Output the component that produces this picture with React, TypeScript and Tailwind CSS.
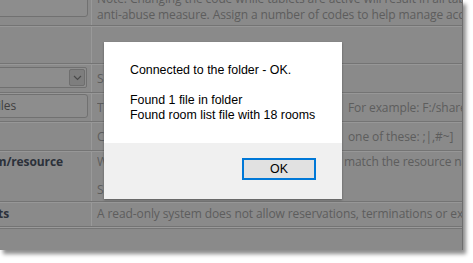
import React from "react"

const rowText = "text-[#5d5d5d]"

function Row({
  left,
  children,
  className,
}: {
  left?: React.ReactNode
  children?: React.ReactNode
  className: string
}) {
  return (
    <div className={`grid grid-cols-[92px_1fr] border-b border-[#747474] ${className}`}>
      <div className="overflow-hidden border-r border-[#999999]">{left}</div>
      <div className={`overflow-hidden whitespace-nowrap pl-[5px] ${rowText}`}>{children}</div>
    </div>
  )
}

// anchors the end of the text at the given width, extra text spills to the left
function EndAt({ w, children, className = "" }: { w: string; children: React.ReactNode; className?: string }) {
  return (
    <div className={`flex justify-end ${w} ${className}`}>
      <span className="whitespace-nowrap">{children}</span>
    </div>
  )
}

function Chevron() {
  return (
    <svg width="9" height="6" viewBox="0 0 9 6" fill="none">
      <path d="M1 1l3.5 3.5L8 1" stroke="#4a4a4a" strokeWidth="1.2" />
    </svg>
  )
}

export default function App() {
  return (
    <div className="min-h-screen bg-white font-['Open_Sans',sans-serif] text-[12px] tracking-[-0.1px]">
      <div className="relative h-[250px] w-[463px] overflow-hidden border-r border-[#6e6e6e] bg-[#8a8a8a] shadow-[3px_4px_4px_rgba(0,0,0,0.45)]">
        <Row className="h-[26px]" left={<div className="-ml-[10px] -mt-[10px] h-[27px] w-[98px] rounded-[3px] border border-[#717171] bg-[#8d8d8d]" />}>
          <div className="-mt-[9px] leading-4">
            <div>Note: Changing the code while tablets are active will result in all tablets being disconnected as an</div>
            <div>anti-abuse measure. Assign a number of codes to help manage access.</div>
          </div>
        </Row>

        <Row className="h-[38px] border-t border-t-[#979797]" />

        <Row
          className="h-[29px] border-t border-t-[#979797]"
          left={
            <div className="-ml-[10px] mt-[2px] flex h-[21px] w-[97px] items-center justify-end rounded-[2px] border border-[#707070] bg-[#8d8d8d] pr-[1px]">
              <div className="flex h-[17px] w-[16px] items-center justify-center rounded-[2px] border border-[#6e6e6e] bg-[#7e7e7e]">
                <Chevron />
              </div>
            </div>
          }
        >
          <div className="flex h-full items-center">Select the file format of the room list.</div>
        </Row>

        <Row
          className="h-[29px] border-t border-t-[#979797]"
          left={
            <div className="-ml-[10px] flex h-[24px] w-[98px] items-center rounded-[3px] border border-[#717171] bg-[#8d8d8d] text-[#3f3f3f]">
              <EndAt w="w-[25px]">F:/shared/roomfiles</EndAt>
            </div>
          }
        >
          <div className="flex h-full items-center">
            <span className="w-[251px] shrink-0 overflow-hidden">The shared folder that holds the room files.</span>
            <span>For example: F:/shared/rooms</span>
          </div>
        </Row>

        <Row className="h-[29px] border-t border-t-[#979797]">
          <div className="flex h-full items-center">
            <span className="w-[251px] shrink-0 overflow-hidden">Column separator in the file. Use</span>
            <span>one of these: ;|,#~]</span>
          </div>
        </Row>

        <Row
          className="h-[51px] border-t border-t-[#979797]"
          left={<EndAt w="w-[63px]" className="mt-[2px] font-bold leading-4 text-[#2c313a]">Match room/resource</EndAt>}
        >
          <div className="pt-[2px] leading-4">
            <div className="flex">
              <span className="w-[247px] shrink-0 overflow-hidden">When enabled, names in the file must</span>
              <span>match the resource names exactly.</span>
            </div>
            <div className="mt-[12px]">Spaces and letter case are ignored.</div>
          </div>
        </Row>

        <Row
          className="h-[25px] border-t border-t-[#979797]"
          left={<EndAt w="w-[9px]" className="mt-[3px] font-bold leading-4 text-[#2c313a]">Read-only tablets</EndAt>}
        >
          <div className="pt-[3px] leading-4">
            A read-only system does not allow reservations, terminations or extensions.
          </div>
        </Row>

        <div className="h-[30px] border-t border-[#9a9a9a]">
          <div className="border-t border-[#757575]" />
        </div>

        <div className="absolute left-[104px] top-[42px] flex h-[157px] w-[238px] flex-col bg-white font-['Liberation_Sans',Arial,sans-serif] tracking-normal text-black shadow-[0_1px_2px_rgba(0,0,0,0.35)]">
          <div className="h-[101px] pl-[26px] pt-[21px] text-[12.4px] leading-[15px]">
            <p>Connected to the folder - OK.</p>
            <p className="mt-[15px]">Found 1 file in folder</p>
            <p>Found room list file with 18 rooms</p>
          </div>
          <div className="flex flex-1 justify-end bg-[#f0f0f0] pr-[26px] pt-[15px]">
            <button className="h-[22px] w-[74px] border-2 border-[#0078d7] bg-[#e1e1e1] text-[12.4px] text-black">
              OK
            </button>
          </div>
        </div>
      </div>
    </div>
  )
}
